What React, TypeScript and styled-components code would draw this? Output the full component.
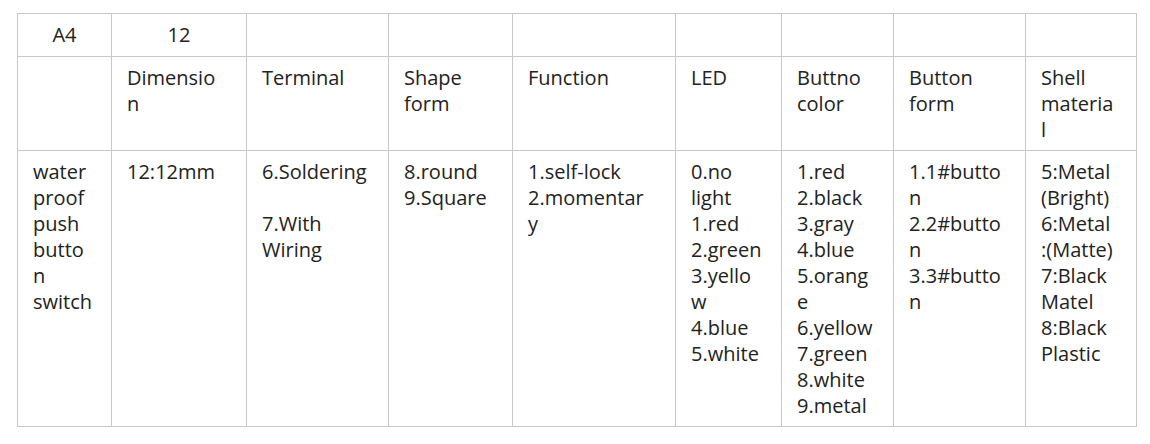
import React from "react";
import styled, { createGlobalStyle } from "styled-components";

const GlobalStyle = createGlobalStyle`
  html, body {
    margin: 0;
    background: #fff;
  }
  body {
    font-family: "Open Sans", "Noto Sans", sans-serif;
    color: #222;
  }
`;

const widths = [94, 135, 142, 124, 163, 106, 112, 132, 111];

const headRow: string[][] = [
  [],
  ["Dimensio", "n"],
  ["Terminal"],
  ["Shape", "form"],
  ["Function"],
  ["LED"],
  ["Buttno", "color"],
  ["Button", "form"],
  ["Shell", "materia", "l"],
];

const bodyRow: string[][] = [
  ["water", "proof", "push", "butto", "n", "switch"],
  ["12:12mm"],
  ["6.Soldering", "", "7.With", "Wiring"],
  ["8.round", "9.Square"],
  ["1.self-lock", "2.momentar", "y"],
  ["0.no", "light", "1.red", "2.green", "3.yello", "w", "4.blue", "5.white"],
  [
    "1.red",
    "2.black",
    "3.gray",
    "4.blue",
    "5.orang",
    "e",
    "6.yellow",
    "7.green",
    "8.white",
    "9.metal",
  ],
  ["1.1#butto", "n", "2.2#butto", "n", "3.3#butto", "n"],
  ["5:Metal", "(Bright)", "6:Metal", ":(Matte)", "7:Black", "Matel", "8:Black", "Plastic"],
];

export default function App() {
  return (
    <Page>
      <GlobalStyle />
      <SpecTable>
        <colgroup>
          {widths.map((w, i) => (
            <col key={i} style={{ width: w }} />
          ))}
        </colgroup>
        <tbody>
          <TopRow>
            <Cell $center>A4</Cell>
            <Cell $center>12</Cell>
            {widths.slice(2).map((_, i) => (
              <Cell key={i} />
            ))}
          </TopRow>
          <tr>
            {headRow.map((lines, i) => (
              <Cell key={i}>
                {lines.map((l, j) => (
                  <Line key={j}>{l}</Line>
                ))}
              </Cell>
            ))}
          </tr>
          <tr>
            {bodyRow.map((lines, i) => (
              <Cell key={i}>
                {lines.map((l, j) => (
                  <Line key={j}>{l}</Line>
                ))}
              </Cell>
            ))}
          </tr>
        </tbody>
      </SpecTable>
    </Page>
  );
}

const Page = styled.div`
  padding: 13px 0 0 17px;
`;

const SpecTable = styled.table`
  border-collapse: collapse;
  table-layout: fixed;
  width: 1119px;
`;

const Cell = styled.td<{ $center?: boolean }>`
  border: 1px solid #c8c8c8;
  padding: 8px 16px 7px 15px;
  vertical-align: top;
  text-align: ${(p) => (p.$center ? "center" : "left")};
  font-size: 20px;
  line-height: 26px;
  white-space: nowrap;
  overflow: hidden;
`;

const TopRow = styled.tr`
  height: 43px;

  ${Cell} {
    vertical-align: middle;
    padding: 0 16px;
  }
`;

const Line = styled.span`
  display: block;
  min-height: 26px;
`;
